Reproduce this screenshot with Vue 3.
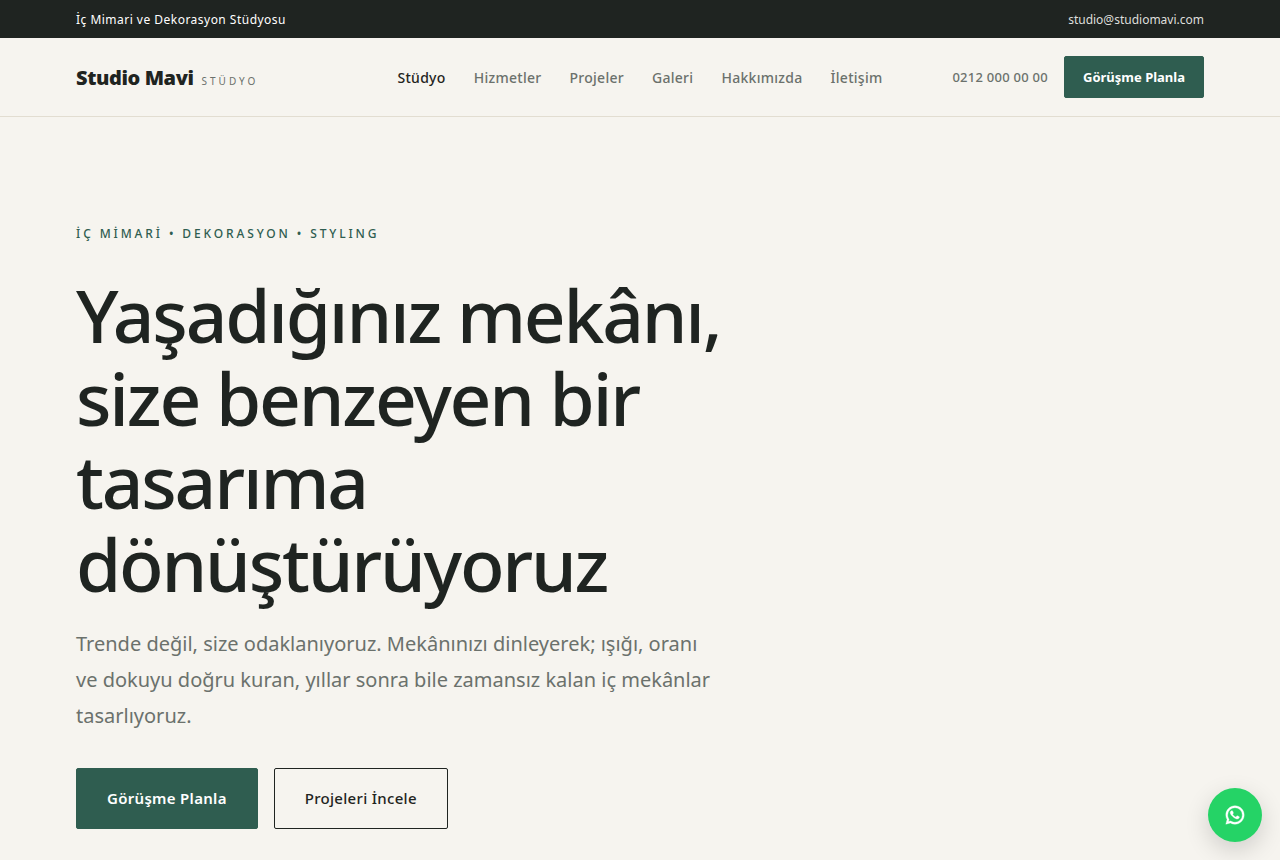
<script setup>
const links = ['Stüdyo', 'Hizmetler', 'Projeler', 'Galeri', 'Hakkımızda', 'İletişim']
</script>

<template>
  <div class="page" lang="tr">
    <div class="topbar">
      <div class="wrap topbar-row">
        <span class="tagline">İç Mimari ve Dekorasyon Stüdyosu</span>
        <a class="mail" href="mailto:studio@studiomavi.com">studio@studiomavi.com</a>
      </div>
    </div>
    <header class="header">
      <div class="wrap header-row">
        <a class="brand" href="#"><strong>Studio Mavi</strong><small>STÜDYO</small></a>
        <nav class="nav">
          <a v-for="(link, i) in links" :key="link" href="#" :class="{ active: i === 0 }">{{ link }}</a>
        </nav>
        <div class="actions">
          <a class="phone" href="tel:02120000000">0212 000 00 00</a>
          <button class="btn btn-small" type="button">Görüşme Planla</button>
        </div>
      </div>
    </header>
    <main class="wrap hero">
      <p class="eyebrow">İÇ MİMARİ • DEKORASYON • STYLING</p>
      <h1>Yaşadığınız mekânı,<br>size benzeyen bir<br>tasarıma<br>dönüştürüyoruz</h1>
      <p class="lead">Trende değil, size odaklanıyoruz. Mekânınızı dinleyerek; ışığı, oranı<br>ve dokuyu doğru kuran, yıllar sonra bile zamansız kalan iç mekânlar<br>tasarlıyoruz.</p>
      <div class="cta">
        <button class="btn" type="button">Görüşme Planla</button>
        <button class="btn btn-outline" type="button">Projeleri İncele</button>
      </div>
    </main>
    <a class="whatsapp" href="#" aria-label="WhatsApp">
      <svg viewBox="0 0 24 24" width="22" height="22" fill="#fff" stroke="#fff" stroke-width="0.4" aria-hidden="true">
        <path d="M7.254 18.494l.724.423A7.95 7.95 0 0 0 12 20a8 8 0 1 0-8-8c0 1.436.378 2.813 1.085 4.024l.422.724-.653 2.401 2.4-.655zM2.005 22l1.352-4.968A9.95 9.95 0 0 1 2 12C2 6.477 6.478 2 12 2s10 4.477 10 10-4.477 10-10 10a9.95 9.95 0 0 1-5.03-1.355L2.005 22z" />
        <path d="M8.392 7.308c.134-.009.268-.011.403-.004.054.003.108.01.162.016.159.018.334.115.393.249.298.676.588 1.357.868 2.04.062.151.025.347-.093.537-.06.097-.154.233-.263.372-.113.145-.356.411-.356.411s-.099.118-.061.265c.015.056.061.137.103.205.37.6.83 1.2 1.35 1.7.52.48 1.1.86 1.7 1.1.22.09.38.04.5-.1.3-.34.6-.72.85-1.1.14-.2.32-.23.54-.15.22.08 1.4.64 2.05.97.14.08.22.14.22.28.01.56-.17 1.1-.62 1.5-.6.54-1.45.93-2.35.67C10.9 15.45 7 11.9 6.7 9.6c.05-1 .75-2.2 1.692-2.292z" />
      </svg>
    </a>
  </div>
</template>

<style>
body {
  background: #f6f4ef;
}
</style>

<style scoped>
.page {
  color: #1f2421;
  font-family: "Segoe UI", "Noto Sans", "Open Sans", sans-serif;
  font-size: 15px;
}
.wrap {
  box-sizing: border-box;
  max-width: 1176px;
  margin: 0 auto;
  padding: 0 24px;
}
a {
  color: inherit;
  text-decoration: none;
}
.topbar {
  background: #1f2421;
  color: #fff;
  font-size: 12px;
  line-height: 18px;
}
.topbar-row {
  display: flex;
  justify-content: space-between;
  padding-top: 11px;
  padding-bottom: 9px;
}
.tagline {
  letter-spacing: 0.04em;
}
.mail {
  color: #dededb;
}
.header {
  border-bottom: 1px solid #e2ddd1;
}
.header-row {
  display: grid;
  grid-template-columns: 1fr auto 1fr;
  align-items: center;
  padding-top: 18px;
  padding-bottom: 18px;
}
.brand {
  display: flex;
  align-items: baseline;
  gap: 8px;
}
.brand strong {
  font-size: 20px;
  font-weight: 900;
  letter-spacing: -0.02em;
}
.brand small {
  color: #6b716c;
  font-size: 10px;
  letter-spacing: 3px;
}
.nav {
  display: flex;
  gap: 28px;
  color: #6b716c;
  font-size: 14px;
  font-weight: 500;
  letter-spacing: 0.02em;
}
.nav .active {
  color: #1f2421;
}
.actions {
  display: flex;
  align-items: center;
  justify-content: flex-end;
  gap: 16px;
}
.phone {
  color: #6b716c;
  font-size: 13px;
  font-weight: 500;
  letter-spacing: 0.02em;
}
.btn {
  padding: 18px 30px;
  border: 1px solid #2f5d50;
  border-radius: 2px;
  background: #2f5d50;
  color: #fff;
  font: inherit;
  font-size: 15px;
  font-weight: 600;
  letter-spacing: 0.02em;
  line-height: 23px;
}
.btn-small {
  padding: 10px 18px;
  font-size: 13px;
  font-weight: 700;
  letter-spacing: 0;
  line-height: 20px;
}
.btn-outline {
  border-color: #1f2421;
  background: transparent;
  color: #1f2421;
  font-weight: 500;
}
.hero {
  padding-top: 107px;
  padding-bottom: 31px;
}
.eyebrow {
  margin: 0;
  color: #2f5d50;
  font-size: 12px;
  font-weight: 500;
  letter-spacing: 0.24em;
  line-height: 20px;
}
h1 {
  margin: 29px 0 0;
  font-size: 73px;
  font-weight: 500;
  letter-spacing: -0.03em;
  line-height: 83px;
}
.lead {
  margin: 21px 0 0;
  color: #6b716c;
  font-size: 20px;
  line-height: 36px;
}
.cta {
  display: flex;
  gap: 16px;
  margin-top: 34px;
}
.whatsapp {
  position: fixed;
  right: 18px;
  bottom: 18px;
  display: grid;
  place-items: center;
  width: 54px;
  height: 54px;
  border-radius: 50%;
  background: #25d366;
  box-shadow: 0 8px 24px rgba(0, 0, 0, 0.16);
}
</style>
